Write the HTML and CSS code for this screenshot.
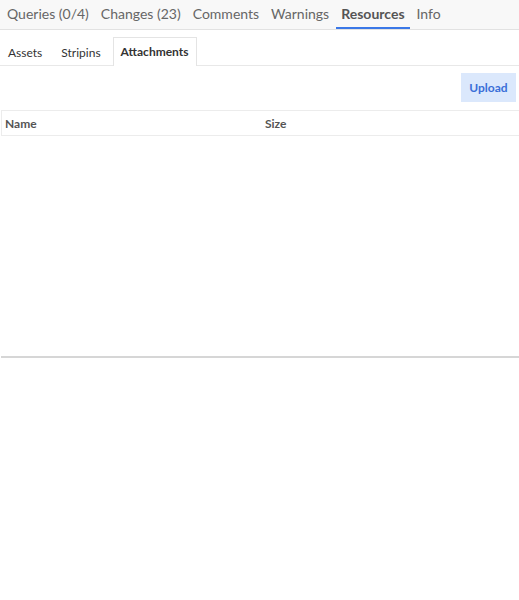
FILE: index.html
```html
<!DOCTYPE html>
<html lang="en">
<head>
    <meta charset="UTF-8">
    <meta name="viewport" content="width=device-width, initial-scale=1.0">
    <title>Resources</title>
    <link rel="stylesheet" href="styles.css">
</head>
<body>
    <nav class="main-tabs">
        <a class="main-tab">Queries (0/4)</a>
        <a class="main-tab">Changes (23)</a>
        <a class="main-tab">Comments</a>
        <a class="main-tab">Warnings</a>
        <a class="main-tab active">Resources</a>
        <a class="main-tab">Info</a>
    </nav>
    <nav class="sub-tabs">
        <a class="sub-tab">Assets</a>
        <a class="sub-tab">Stripins</a>
        <a class="sub-tab active">Attachments</a>
    </nav>
    <div class="toolbar">
        <button type="button" class="upload">Upload</button>
    </div>
    <div class="table">
        <div class="table-head">
            <div class="col-name">Name</div>
            <div class="col-size">Size</div>
        </div>
        <div class="table-body"></div>
    </div>
</body>
</html>
```

FILE: styles.css
```css
body {
    font-family: Lato, "Open Sans", sans-serif;
    background-color: #fff;
    margin: 0;
    padding: 0;
    color: #333;
}
.main-tabs {
    display: flex;
    height: 29px;
    padding-left: 2px;
    background-color: #f8f8f8;
    border-bottom: 1px solid #e2e2e2;
}
.main-tab {
    font-size: 14px;
    line-height: 27px;
    color: #666;
    padding: 0 5px;
    margin-right: 2px;
    border-bottom: 2px solid transparent;
}
.main-tab.active {
    font-weight: bold;
    color: #555;
    border-bottom-color: #3b78e7;
}
.sub-tabs {
    display: flex;
    align-items: flex-end;
    height: 35px;
    border-bottom: 1px solid #e8e8e8;
}
.sub-tab {
    font-size: 12px;
    padding: 0 7px;
    margin-right: 3px;
    line-height: 27px;
    color: #333;
    border: 1px solid transparent;
    border-bottom: none;
    margin-bottom: -1px;
}
.sub-tab:nth-child(2) {
    margin-right: 4px;
}
.sub-tab.active {
    font-weight: bold;
    background-color: #fff;
    border-color: #e4e4e4;
    height: 28px;
}
.toolbar {
    display: flex;
    justify-content: flex-end;
    padding: 7px 3px 8px 0;
}
.upload {
    background-color: #dbe8fc;
    color: #3a6fd8;
    font-family: inherit;
    font-weight: bold;
    font-size: 12px;
    border: none;
    border-radius: 0;
    width: 55px;
    height: 29px;
    padding: 0;
}
.table {
    margin-left: 1px;
    border-bottom: 2px solid #d6d6d6;
}
.table-head {
    display: flex;
    height: 24px;
    align-items: center;
    font-size: 12px;
    font-weight: bold;
    color: #555;
    border: 1px solid #ececec;
    border-right: none;
}
.col-name {
    width: 260px;
    padding-left: 3px;
}
.table-body {
    height: 220px;
}
```
